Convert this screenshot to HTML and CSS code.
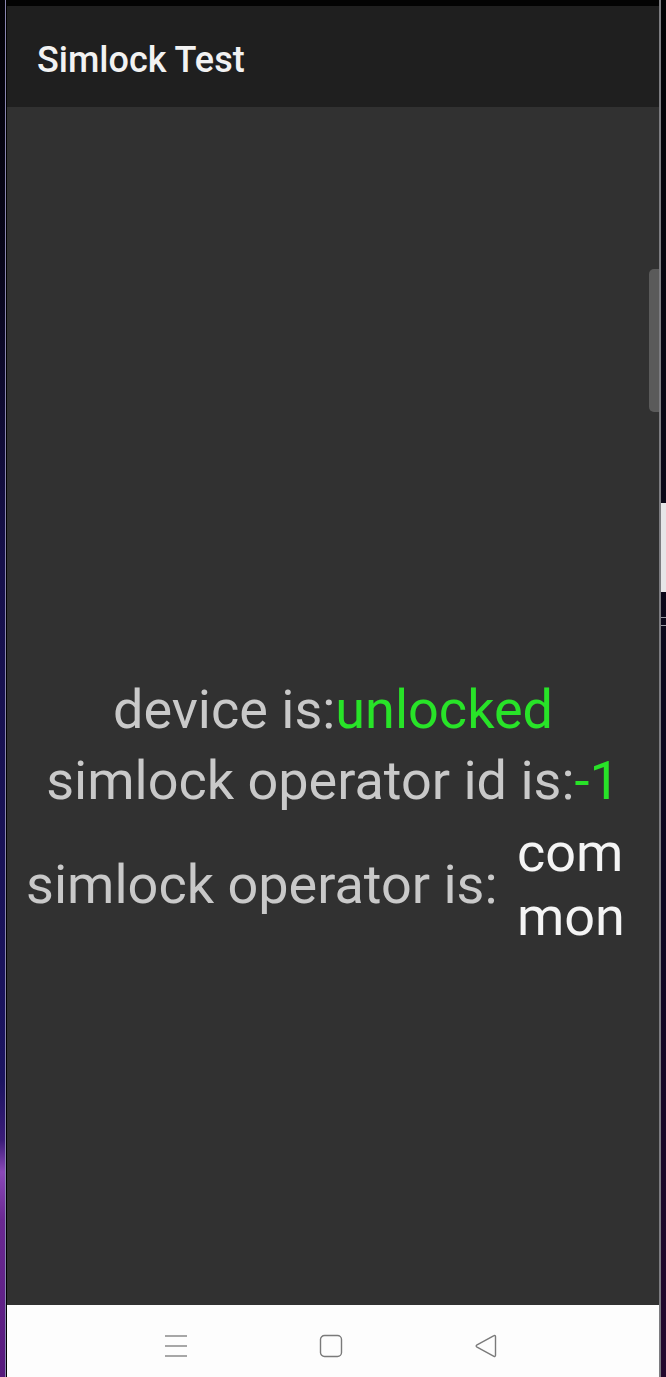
FILE: index.html
```html
<!DOCTYPE html>
<html>
<head>
    <meta charset="utf-8">
    <title>Simlock Test</title>
    <link rel="stylesheet" href="styles.css">
</head>
<body>
    <div class="frame">
        <div class="edge edge-left"></div>

        <div class="phone">
            <div class="status"></div>
            <header class="toolbar">
                <h1>Simlock Test</h1>
            </header>

            <main class="content">
                <div class="info">
                    <p class="line">device is:<span class="ok">unlocked</span></p>
                    <p class="line">simlock operator id is:<span class="ok">-1</span></p>
                    <div class="row">
                        <span class="label">simlock operator is: </span>
                        <span class="value">common</span>
                    </div>
                </div>
                <!-- edge panel pull tab -->
                <div class="handle"></div>
            </main>

            <nav class="navbar">
                <svg class="nav-icon" width="24" height="24" viewBox="0 0 24 24">
                    <path d="M1 2h22M1 12h22M1 22h22" fill="none" stroke="#8a8a8a" stroke-width="1.4"/>
                </svg>
                <svg class="nav-icon" width="24" height="24" viewBox="0 0 24 24">
                    <rect x="1.5" y="1.5" width="21" height="21" rx="4" fill="none" stroke="#7a7a7a" stroke-width="1.4"/>
                </svg>
                <svg class="nav-icon" width="24" height="24" viewBox="0 0 24 24">
                    <path d="M21.5 2.5v19a1 1 0 0 1-1.5.8L2.6 12.8a1 1 0 0 1 0-1.6L20 1.7a1 1 0 0 1 1.5.8z" fill="none" stroke="#7a7a7a" stroke-width="1.4" stroke-linejoin="round"/>
                </svg>
            </nav>
        </div>

        <div class="edge edge-right">
            <div class="peek"></div>
            <div class="tick"></div>
            <div class="tick"></div>
        </div>
    </div>
</body>
</html>
```

FILE: styles.css
```css
html, body {
    margin: 0;
    padding: 0;
    background: #000;
}

.frame {
    display: flex;
    width: 666px;
    height: 1377px;
    overflow: hidden;
}

/* wallpaper showing at the sides */
.edge {
    flex: 0 0 5px;
}

.edge-left {
    background: linear-gradient(to bottom, #040308 0, #08061a 260px, #16104a 560px, #1b1460 1080px, #3a1c78 1140px, #8a48b8 1172px, #6a2892 1220px, #561a7c 1377px);
    border-right: 1px solid #8a86b0;
    margin-right: 1px;
}

.edge-right {
    background: linear-gradient(to bottom, #020204 0, #0a0818 500px, #0c0620 900px, #24082e 1377px);
    border-left: 2px solid #7c7c80;
    display: flex;
    flex-direction: column;
}

.peek {
    height: 89px;
    margin-top: 503px;
    background: #e6e6e8;
}

.tick {
    height: 1px;
    margin-top: 25px;
    background: #9a9aa4;
}

.tick + .tick {
    margin-top: 7px;
}

.phone {
    flex: 1;
    display: flex;
    flex-direction: column;
    font-family: Roboto, "Liberation Sans", sans-serif;
}

.status {
    height: 6px;
    background: #030303;
}

.toolbar {
    height: 101px;
    box-sizing: border-box;
    background: #1f1f1f;
    display: flex;
    align-items: center;
    padding: 6px 0 0 30px;
}

.toolbar h1 {
    margin: 0;
    font-size: 36px;
    font-weight: 500;
    color: #f2f2f2;
}

.content {
    flex: 1;
    position: relative;
    background: #313131;
    padding-top: 571px;
}

.info {
    display: flex;
    flex-direction: column;
    align-items: center;
    font-size: 54px;
    line-height: 1.17;
    color: #c9c9c9;
}

.line {
    margin: 0 0 8px;
    white-space: nowrap;
}

.line + .line {
    margin-bottom: 9px;
}

.ok {
    color: #28e328;
}

.row {
    display: flex;
    align-items: center;
    justify-content: center;
    padding-right: 9px;
}

.label {
    white-space: pre;
}

.value {
    width: 114px;
    margin-left: 6px;
    word-break: break-all;
    color: #f4f4f4;
}

.handle {
    position: absolute;
    top: 162px;
    right: 0;
    width: 10px;
    height: 143px;
    background: #5a5a5a;
    border-radius: 5px 0 0 5px;
}

.navbar {
    height: 72px;
    box-sizing: border-box;
    background: #fdfdfd;
    display: flex;
    align-items: center;
    justify-content: center;
    gap: 131px;
    padding: 9px 4px 0 0;
}

.nav-icon {
    display: block;
}
```
